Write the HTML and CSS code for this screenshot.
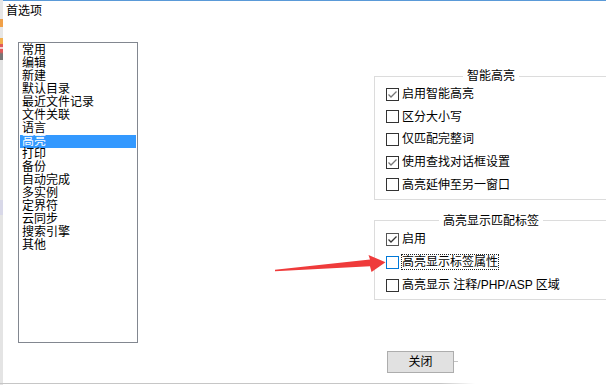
FILE: index.html
```html
<!DOCTYPE html>
<html lang="zh">
<head>
<meta charset="UTF-8">
<meta name="viewport" content="width=device-width, initial-scale=1.0">
<title>首选项</title>
<link rel="stylesheet" href="styles.css">
</head>
<body>
<div class="screen">
<div class="desk"></div>
<div class="dialog">
<div class="caption">首选项</div>
<div class="main">
<ul class="catlist">
<li>常用</li>
<li>编辑</li>
<li>新建</li>
<li>默认目录</li>
<li>最近文件记录</li>
<li>文件关联</li>
<li>语言</li>
<li class="sel">高亮</li>
<li>打印</li>
<li>备份</li>
<li>自动完成</li>
<li>多实例</li>
<li>定界符</li>
<li>云同步</li>
<li>搜索引擎</li>
<li>其他</li>
</ul>
<div class="panel">
<fieldset class="group group-smart">
<legend>智能高亮</legend>
<label class="opt"><span class="box on"><svg viewBox="0 0 11 11"><polyline points="1.5,5.5 4,8 9.5,2.5"/></svg></span>启用智能高亮</label>
<label class="opt"><span class="box"></span>区分大小写</label>
<label class="opt"><span class="box"></span>仅匹配完整词</label>
<label class="opt"><span class="box on"><svg viewBox="0 0 11 11"><polyline points="1.5,5.5 4,8 9.5,2.5"/></svg></span>使用查找对话框设置</label>
<label class="opt"><span class="box"></span>高亮延伸至另一窗口</label>
</fieldset>
<fieldset class="group group-tags">
<legend>高亮显示匹配标签</legend>
<label class="opt"><span class="box on dark"><svg viewBox="0 0 11 11"><polyline points="1.5,5.5 4,8 9.5,2.5"/></svg></span>启用</label>
<label class="opt"><span class="box focus"></span><span class="ring">高亮显示标签属性</span></label>
<label class="opt"><span class="box"></span>高亮显示 注释/PHP/ASP 区域</label>
</fieldset>
<div class="actions">
<button class="btn">关闭</button>
<span class="tick"></span>
</div>
</div>
</div>
<div class="bottom-edge"></div>
</div>
<!-- 标注箭头 -->
<svg class="arrow" viewBox="0 0 606 385">
<polygon points="275,269.8 370,259.6 368.5,255 385.5,262.2 371.5,272 370,266.2 275,271.2"/>
</svg>
</div>
</body>
</html>
```

FILE: styles.css
```css
html, body {
    margin: 0;
    padding: 0;
}
body {
    width: 606px;
    height: 385px;
    overflow: hidden;
    background-color: #fff;
    font-family: 'Liberation Sans', 'Noto Sans CJK SC', sans-serif;
    font-size: 12px;
    color: #000;
}
.screen {
    position: relative;
    display: flex;
    width: 606px;
    height: 385px;
}
.desk {
    width: 3px;
    flex: none;
    background: linear-gradient(to bottom,
        #e6e6e6 0, #e6e6e6 19px,
        #f0a048 19px, #f0a048 27px,
        #e6e6e6 27px, #e6e6e6 38px,
        #f2b04c 38px, #f2b04c 44px,
        #e05a5a 44px, #e05a5a 47px,
        #f4d0d0 47px, #f4d0d0 49px,
        #e05a5a 49px, #e05a5a 52px,
        #777 54px, #777 60px,
        #e4e4e4 60px, #e4e4e4 200px,
        #d8d8e8 200px, #d8d8e8 215px,
        #e4e4e4 215px);
}
.dialog {
    flex: 1;
    display: flex;
    flex-direction: column;
    min-width: 0;
    border-top: 1px solid #5a9ad8;
    background-color: #fff;
}
.caption {
    padding: 3px 0 0 3px;
    line-height: 14px;
}
.main {
    flex: 1;
    display: grid;
    grid-template-columns: 120px 234px;
    column-gap: 236px;
    align-items: start;
    margin-top: 24px;
    padding-left: 15px;
}
.catlist {
    list-style: none;
    margin: 0;
    padding: 1px;
    height: 301px;
    box-sizing: border-box;
    border: 1px solid #828790;
    overflow: hidden;
}
.catlist li {
    line-height: 13px;
    height: 13px;
    padding-left: 2px;
    white-space: nowrap;
}
.catlist li.sel {
    background-color: #3399ff;
    color: #fff;
}
.panel {
    padding-top: 27px;
    display: flex;
    flex-direction: column;
}
.group {
    margin: 0;
    min-width: 0;
    padding: 0 0 3px 0;
    border: 1px solid #dcdcdc;
}
.group legend {
    margin: 0 auto;
    padding: 0 4px;
    line-height: 14px;
}
.group-tags {
    margin-top: 14px;
    padding-bottom: 2px;
}
.opt {
    display: flex;
    align-items: center;
    height: 23px;
    margin-left: 11px;
    line-height: 14px;
    white-space: nowrap;
}
.group-smart .opt {
    height: 22.6px;
}
.box {
    flex: none;
    width: 13px;
    height: 13px;
    box-sizing: border-box;
    border: 1px solid #333;
    background-color: #fff;
    margin-right: 3px;
    display: flex;
}
.box svg {
    width: 11px;
    height: 11px;
    fill: none;
    stroke: #777;
    stroke-width: 1.3;
}
.box.dark {
    border-color: #555;
}
.box.dark svg {
    stroke: #333;
}
.box.focus {
    border-color: #0078d7;
}
.ring {
    outline: 1px dotted #222;
}
.actions {
    display: flex;
    align-items: center;
    margin-top: 51px;
    padding-left: 13px;
}
.btn {
    width: 67px;
    height: 22px;
    padding: 0;
    box-sizing: border-box;
    border: 1px solid #adadad;
    background-color: #e1e1e1;
    font-family: inherit;
    font-size: 12px;
    line-height: 14px;
    color: #000;
}
.tick {
    width: 4px;
    height: 1px;
    background-color: #c4c4c4;
}
.bottom-edge {
    height: 1px;
    margin: 0 0 1px -3px;
    background: linear-gradient(to right, #c6c6c6 0, #c6c6c6 440px, rgba(198,198,198,0) 475px);
}
.arrow {
    position: absolute;
    left: 0;
    top: 0;
    width: 606px;
    height: 385px;
    pointer-events: none;
}
.arrow polygon {
    fill: #ef3b3b;
}
```
